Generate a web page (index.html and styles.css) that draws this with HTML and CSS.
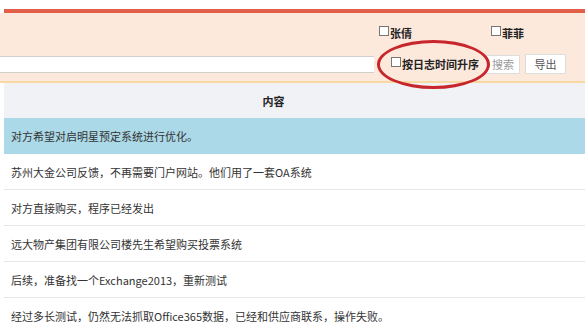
FILE: index.html
```html
<!DOCTYPE html>
<html lang="zh-CN">
<head>
    <meta charset="UTF-8">
    <meta name="viewport" content="width=device-width, initial-scale=1.0">
    <title>日志查询</title>
    <link rel="stylesheet" href="styles.css">
</head>
<body>
    <div class="top-gap"></div>
    <div class="red-bar"></div>

    <div class="filter-panel">
        <div class="filter-row people">
            <label class="check check-first"><input type="checkbox">张倩</label>
            <label class="check check-second"><input type="checkbox">菲菲</label>
        </div>
        <div class="filter-row search">
            <input class="keyword" type="text">
            <label class="check sort-check"><input type="checkbox">按日志时间升序</label>
            <button class="btn btn-search">搜索</button>
            <button class="btn btn-export">导出</button>
        </div>
        <!-- hand-drawn mark around the sort option -->
        <div class="circle-mark"></div>
    </div>

    <table class="log-table">
        <thead>
            <tr><th>内容</th></tr>
        </thead>
        <tbody>
            <tr class="selected"><td>对方希望对启明星预定系统进行优化。</td></tr>
            <tr><td>苏州大金公司反馈，不再需要门户网站。他们用了一套OA系统</td></tr>
            <tr><td>对方直接购买，程序已经发出</td></tr>
            <tr><td>远大物产集团有限公司楼先生希望购买投票系统</td></tr>
            <tr><td>后续，准备找一个Exchange2013，重新测试</td></tr>
            <tr><td>经过多长测试，仍然无法抓取Office365数据，已经和供应商联系，操作失败。</td></tr>
        </tbody>
    </table>
</body>
</html>
```

FILE: styles.css
```css
body {
    margin: 0;
    font-family: "Noto Sans CJK SC", "DejaVu Sans", sans-serif;
    font-size: 11px;
    color: #333;
    background: #fff;
    overflow: hidden;
}
.top-gap {
    height: 9px;
}
.red-bar {
    height: 4px;
    margin-left: 4px;
    background: #e2604a;
}
.filter-panel {
    position: relative;
    height: 68px;
    background: #fde9dc;
    border-bottom: 2px solid #f8d9a2;
}
.filter-row {
    display: flex;
    align-items: center;
}
.filter-row.people {
    height: 26px;
    padding-top: 7px;
    padding-left: 379px;
}
.check {
    display: flex;
    align-items: center;
    font-weight: bold;
    color: #222;
    white-space: nowrap;
}
.check input {
    appearance: none;
    width: 10px;
    height: 10px;
    margin: 0 1px 4px 0;
    border: 1px solid #777;
    background: #fff;
}
.check-second {
    margin-left: 79px;
}
.filter-row.search {
    height: 20px;
    margin-top: 8px;
}
.keyword {
    width: 374px;
    height: 15px;
    margin: 0;
    padding: 0;
    border: none;
    border-top: 1px solid #d2cfcc;
    border-bottom: 1px solid #d2cfcc;
    background: #fff;
}
.sort-check {
    margin-left: 17px;
}
.btn {
    height: 19px;
    padding: 0 5px;
    font-family: inherit;
    font-size: 11px;
    background: #fff;
    border: 1px solid #dcdcdc;
    border-radius: 1px;
}
.btn-search {
    width: 34px;
    margin-left: 7px;
    color: #9a9a9a;
}
.btn-export {
    width: 41px;
    height: 20px;
    margin-left: 5px;
    color: #555;
}
.circle-mark {
    position: absolute;
    left: 377px;
    top: 27px;
    width: 107px;
    height: 43px;
    border: 3px solid #c8262d;
    border-radius: 50%;
}
.log-table {
    width: calc(100% - 4px);
    margin-left: 4px;
    border-collapse: collapse;
}
.log-table th {
    height: 35px;
    padding: 0 42px 0 0;
    font-weight: bold;
    text-align: center;
    background: #f1f2f6;
    color: #222;
}
.log-table td {
    height: 35px;
    padding: 0 0 0 7px;
    border-bottom: 1px solid #e6e6e6;
}
.log-table tr.selected td {
    background: #abd9e8;
    border-bottom-color: #abd9e8;
}
```
